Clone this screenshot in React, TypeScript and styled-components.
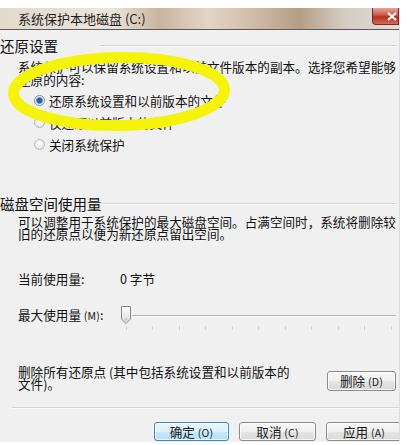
import styled, { createGlobalStyle } from "styled-components";

const GlobalStyle = createGlobalStyle`
  html, body {
    margin: 0;
    background: #ffffff;
  }
  body {
    font-family: "Noto Sans CJK SC", "Noto Sans", sans-serif;
    color: #111111;
  }
`;

const Page = styled.div`
  position: relative;
  width: 410px;
  height: 445px;
  padding-top: 8px;
  box-sizing: border-box;
  overflow: hidden;
`;

const Dialog = styled.div`
  width: 400px;
  background: #f0f0f0;
  border-right: 1px solid #dedede;
  box-sizing: border-box;
  overflow: hidden;
  padding-bottom: 1px;
`;

const TitleBar = styled.div`
  height: 21px;
  display: flex;
  align-items: center;
  padding-left: 18px;
  background: linear-gradient(
    90deg,
    #e3d9cd 0%,
    #ece4da 28%,
    #c9b59e 40%,
    #e2d5c6 52%,
    #d3c0aa 62%,
    #b59d84 75%,
    #d5cbc1 86%,
    #e1dedb 100%
  );
  border-bottom: 1px solid #5a5a5a;
  font-size: 13px;
  color: #1e1e1e;
`;

const Title = styled.span`
  line-height: 21px;
`;

const CloseButton = styled.span`
  align-self: flex-start;
  margin-left: auto;
  width: 27px;
  height: 17px;
  box-sizing: border-box;
  display: flex;
  align-items: center;
  justify-content: flex-end;
  padding-right: 1px;
  border: 1px solid #7e2a20;
  border-top: none;
  border-radius: 0 0 0 4px;
  background: linear-gradient(#e9a696, #cc5647 45%, #b0301f 55%, #d66a52);
`;

const Body = styled.div`
  padding: 4px 0 0 18px;
  font-size: 12.6px;
`;

const GroupHeader = styled.div<{ $top: number }>`
  display: flex;
  align-items: center;
  height: 16px;
  margin: ${(p) => p.$top}px 3px 0 -18px;
  font-size: 14.5px;
  line-height: 16px;
  white-space: nowrap;
  &::after {
    content: "";
    margin-left: auto;
    width: 296px;
    height: 1px;
    border-top: 1px solid #d3d3d3;
    background: #ffffff;
  }
`;

const Paragraph = styled.p<{ $top: number; $line: number }>`
  margin: ${(p) => p.$top}px 0 0;
  width: 382px;
  line-height: ${(p) => p.$line}px;
`;

const RadioList = styled.div`
  margin-top: 3px;
  display: flex;
  flex-direction: column;
`;

const RadioRow = styled.label`
  height: 22px;
  display: flex;
  align-items: center;
  gap: 4px;
  padding-left: 16px;
`;

const RadioDot = styled.span<{ $checked?: boolean }>`
  width: 11px;
  height: 11px;
  box-sizing: border-box;
  border-radius: 50%;
  border: 1px solid ${(p) => (p.$checked ? "#8a8c8e" : "#b4b6b8")};
  background: ${(p) =>
    p.$checked
      ? "radial-gradient(circle, #1d5fa6 0 2px, #5d97d0 3px, #f2f2f2 4px)"
      : "radial-gradient(circle at 50% 40%, #ffffff, #dedede)"};
`;

const InfoRow = styled.div`
  margin-top: 31px;
  display: grid;
  grid-template-columns: 102px auto;
  line-height: 16px;
`;

const SliderRow = styled.div`
  margin-top: 19px;
  display: grid;
  grid-template-columns: 102px 276px;
  line-height: 18px;
`;

const Key = styled.span`
  font-size: 10.5px;
  letter-spacing: 0.2px;
`;

const Slider = styled.div`
  display: flex;
  flex-direction: column;
`;

const SliderTop = styled.div`
  height: 18px;
  display: flex;
  align-items: center;
`;

const Track = styled.div`
  flex: 1;
  height: 1px;
  border-top: 1px solid #b2b2b2;
  background: #ffffff;
  margin-top: 1px;
`;

const Ticks = styled.div`
  height: 4px;
  margin: 2px 0 0 6px;
  background: repeating-linear-gradient(
    90deg,
    #cfcfcf 0 1px,
    transparent 1px 26.5px
  );
`;

const DeleteRow = styled.div`
  margin-top: 36px;
  display: flex;
  align-items: flex-start;
  padding-right: 3px;
`;

const DeleteText = styled.p`
  margin: 0;
  width: 275px;
  line-height: 12px;
`;

const Button = styled.button<{ $primary?: boolean; $w: number }>`
  width: ${(p) => p.$w}px;
  height: 19px;
  flex: none;
  box-sizing: border-box;
  padding: 0;
  border: 1px solid ${(p) => (p.$primary ? "#3d86c0" : "#8b8b8b")};
  border-radius: 3px;
  background: ${(p) =>
    p.$primary
      ? "linear-gradient(#eaf6fd, #dcf1fc 50%, #c6e8fb 51%, #b4def6)"
      : "linear-gradient(#f7f7f7, #f0f0f0 50%, #e4e4e4 51%, #dadada)"};
  box-shadow: inset 0 0 0 1px rgba(255, 255, 255, 0.75);
  font-family: "Noto Sans CJK SC", sans-serif;
  font-size: 12.6px;
  line-height: 17px;
  color: #1a1a1a;
`;

const DeleteButton = styled(Button)`
  margin-left: auto;
  margin-top: 5px;
  height: 20px;
`;

const Footer = styled.div`
  margin: 16px 0 0 12px;
  border-top: 1px solid #d5d5d5;
  box-shadow: inset 0 1px 0 #fafafa;
  padding: 14px 0 0 142px;
  display: flex;
  gap: 10px;
`;

const Highlight = styled.svg`
  position: absolute;
  left: 0;
  top: 0;
  pointer-events: none;
`;

export default function App() {
  return (
    <Page>
      <GlobalStyle />
      <Dialog>
        <TitleBar>
          <Title>系统保护本地磁盘 (C:)</Title>
          <CloseButton>
            <svg width="10" height="9" viewBox="0 0 10 9">
              <path d="M1 1 L9 8 M9 1 L1 8" stroke="#ffffff" strokeWidth="2" />
            </svg>
          </CloseButton>
        </TitleBar>
        <Body>
          <GroupHeader $top={4}>还原设置</GroupHeader>
          <Paragraph $top={6} $line={13}>
            系统保护可以保留系统设置和以前文件版本的副本。选择您希望能够还原的内容:
          </Paragraph>
          <RadioList>
            <RadioRow>
              <RadioDot $checked />
              还原系统设置和以前版本的文件
            </RadioRow>
            <RadioRow>
              <RadioDot />
              仅还原以前版本的文件
            </RadioRow>
            <RadioRow>
              <RadioDot />
              关闭系统保护
            </RadioRow>
          </RadioList>
          <GroupHeader $top={41}>磁盘空间使用量</GroupHeader>
          <Paragraph $top={4} $line={12}>
            可以调整用于系统保护的最大磁盘空间。占满空间时，系统将删除较旧的还原点以便为新还原点留出空间。
          </Paragraph>
          <InfoRow>
            <span>当前使用量:</span>
            <span>0 字节</span>
          </InfoRow>
          <SliderRow>
            <span>
              最大使用量 <Key>(M)</Key>:
            </span>
            <Slider>
              <SliderTop>
                <svg width="12" height="18" viewBox="0 0 12 18">
                  <defs>
                    <linearGradient id="thumb" x1="0" x2="0" y1="0" y2="1">
                      <stop offset="0" stopColor="#fbfbfb" />
                      <stop offset="1" stopColor="#dddddd" />
                    </linearGradient>
                  </defs>
                  <path
                    d="M1.5 0.5 H10.5 V13 L6 17.5 L1.5 13 Z"
                    fill="url(#thumb)"
                    stroke="#8a8a8a"
                  />
                  <circle cx="6" cy="13" r="1.5" fill="#c9c9c9" />
                </svg>
                <Track />
              </SliderTop>
              <Ticks />
            </Slider>
          </SliderRow>
          <DeleteRow>
            <DeleteText>
              删除所有还原点 (其中包括系统设置和以前版本的文件)。
            </DeleteText>
            <DeleteButton $w={69}>
              删除 <Key>(D)</Key>
            </DeleteButton>
          </DeleteRow>
        </Body>
        <Footer>
          <Button $primary $w={75}>
            确定 <Key>(O)</Key>
          </Button>
          <Button $w={77}>
            取消 <Key>(C)</Key>
          </Button>
          <Button $w={76}>
            应用 <Key>(A)</Key>
          </Button>
        </Footer>
      </Dialog>
      <Highlight width="410" height="445" viewBox="0 0 410 445">
        <ellipse
          cx="119"
          cy="91.5"
          rx="105.5"
          ry="34"
          fill="none"
          stroke="#f6f30a"
          strokeWidth="11"
          transform="rotate(-1 119 91.5)"
        />
      </Highlight>
    </Page>
  );
}
